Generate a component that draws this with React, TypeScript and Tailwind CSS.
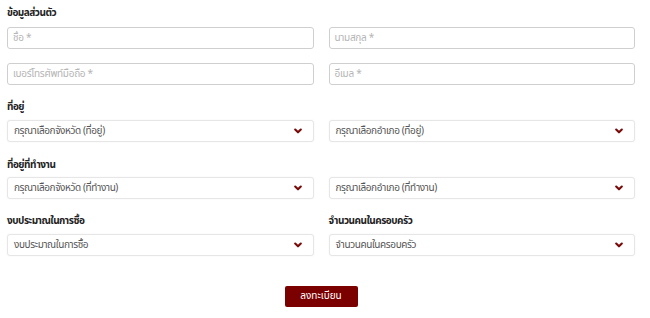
import React from "react";

const Chevron = () => (
  <svg width="8" height="6" viewBox="0 0 8 6" className="shrink-0">
    <path d="M1.2 1.5 L4 4.3 L6.8 1.5" fill="none" stroke="#7a0a0a" strokeWidth="2.1" strokeLinecap="round" strokeLinejoin="round" />
  </svg>
);

const Input = ({ ph }: { ph: string }) => (
  <div className="h-[22px] rounded-[3px] border border-[#cfcfcf] bg-white flex items-center px-[5px] text-[10px] tracking-[-0.3px] text-[#b5b5b5]">
    {ph}
  </div>
);

const Select = ({ ph }: { ph: string }) => (
  <div className="h-[22px] rounded-[3px] border border-[#e6e6e6] shadow-[0_0_2px_rgba(0,0,0,0.06)] bg-white flex items-center justify-between pl-[6px] pr-[11px] text-[10px] tracking-[-0.4px] text-[#555]">
    <span>{ph}</span>
    <Chevron />
  </div>
);

const H = ({ t }: { t: string }) => (
  <div className="text-[10px] font-bold text-[#222] leading-[14px] tracking-[-0.5px]">{t}</div>
);

export default function App() {
  return (
    <div className="w-[650px] h-[318px] bg-white pl-[7px] pr-[15px] pt-[6px]" style={{ fontFamily: '"Noto Sans Thai", "Noto Sans", sans-serif' }}>
      <H t="ข้อมูลส่วนตัว" />
      <div className="grid grid-cols-2 gap-x-[15px] gap-y-[14px] mt-[7px]">
        <Input ph="ชื่อ *" />
        <Input ph="นามสกุล *" />
        <Input ph="เบอร์โทรศัพท์มือถือ *" />
        <Input ph="อีเมล *" />
      </div>
      <div className="mt-[15px]"><H t="ที่อยู่" /></div>
      <div className="grid grid-cols-2 gap-x-[15px] mt-[6px]">
        <Select ph="กรุณาเลือกจังหวัด (ที่อยู่)" />
        <Select ph="กรุณาเลือกอำเภอ (ที่อยู่)" />
      </div>
      <div className="mt-[16px]"><H t="ที่อยู่ที่ทำงาน" /></div>
      <div className="grid grid-cols-2 gap-x-[15px] mt-[5px]">
        <Select ph="กรุณาเลือกจังหวัด (ที่ทำงาน)" />
        <Select ph="กรุณาเลือกอำเภอ (ที่ทำงาน)" />
      </div>
      <div className="grid grid-cols-2 gap-x-[15px] mt-[15px]">
        <div>
          <H t="งบประมาณในการซื้อ" />
          <div className="mt-[6px]"><Select ph="งบประมาณในการซื้อ" /></div>
        </div>
        <div>
          <H t="จำนวนคนในครอบครัว" />
          <div className="mt-[6px]"><Select ph="จำนวนคนในครอบครัว" /></div>
        </div>
      </div>
      <div className="flex justify-center mt-[30px]">
        <button className="h-[21px] w-[73px] rounded-[2px] bg-[#7b0000] text-white text-[10px] flex items-center justify-center">
          ลงทะเบียน
        </button>
      </div>
    </div>
  );
}
